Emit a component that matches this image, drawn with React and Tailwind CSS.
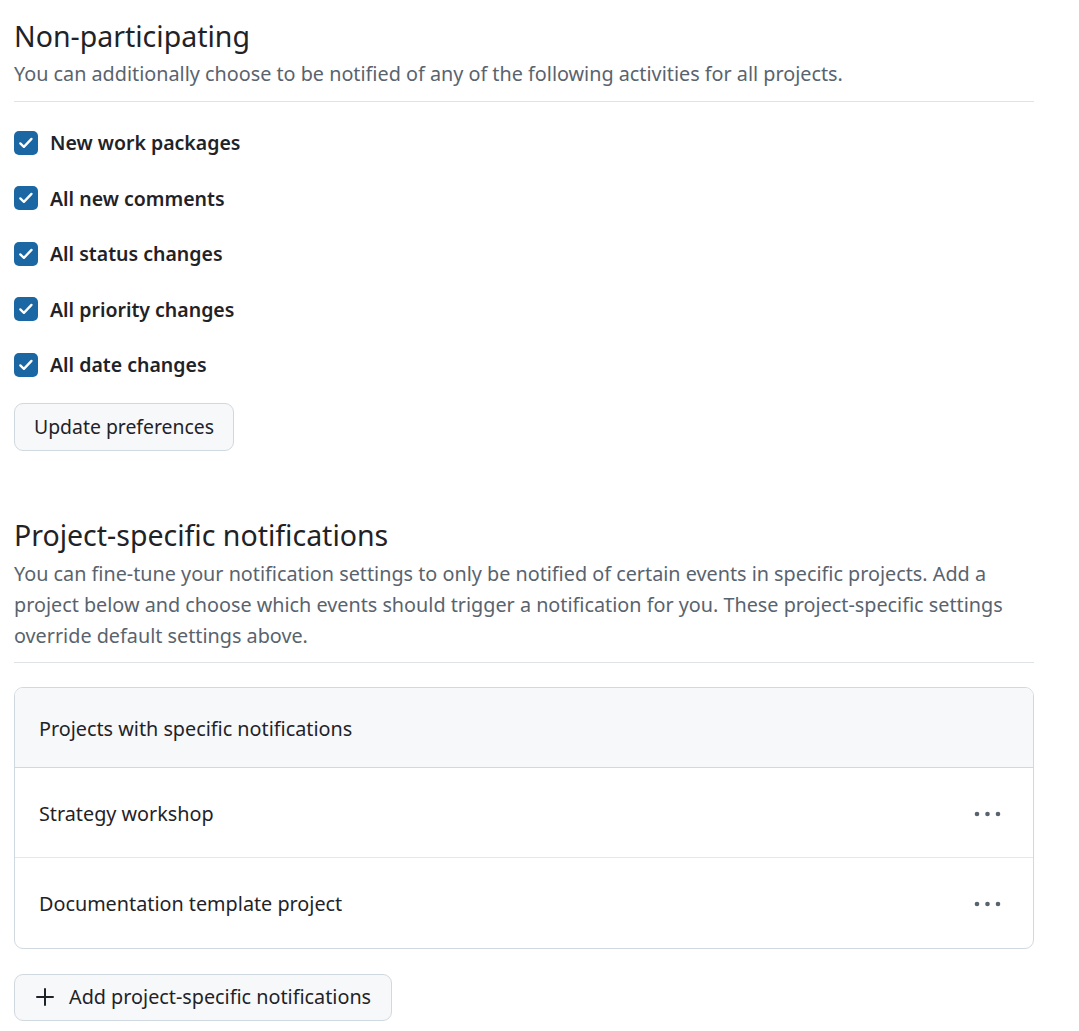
import React from 'react';

const activities = [
  'New work packages',
  'All new comments',
  'All status changes',
  'All priority changes',
  'All date changes',
];

const projects = ['Strategy workshop', 'Documentation template project'];

const CheckBox = () => (
  <span className="w-6 h-6 rounded-[5px] bg-[#1a67a3] flex items-center justify-center shrink-0">
    <svg width="18" height="18" viewBox="0 0 18 18" fill="none">
      <path d="M3.3 9.4l3.6 3.5 7.6-8" stroke="white" strokeWidth="2.3" strokeLinecap="round" strokeLinejoin="round" />
    </svg>
  </span>
);

const Kebab = () => (
  <svg width="30" height="8" viewBox="0 0 30 8" fill="#59636e">
    <circle cx="4" cy="4" r="2.3" />
    <circle cx="14.5" cy="4" r="2.3" />
    <circle cx="25" cy="4" r="2.3" />
  </svg>
);

export default function App() {
  return (
    <div className="bg-white min-h-screen pl-[14px] pr-[45px] pt-[18px] pb-4 text-[#1f2328]" style={{ fontFamily: '"Noto Sans", "Open Sans", sans-serif' }}>
      <h2 className="text-[28.5px] leading-[37px] font-normal">Non-participating</h2>
      <p className="mt-[4px] text-[19.8px] leading-[30px] text-[#59636e]">
        You can additionally choose to be notified of any of the following activities for all projects.
      </p>
      <div className="mt-[12px] border-t border-[#dfe3e8]" />

      <div className="mt-[13px] flex flex-col">
        {activities.map((a) => (
          <label key={a} className="h-[55.5px] flex items-center gap-3 text-[19.5px] font-semibold">
            <CheckBox />
            <span>{a}</span>
          </label>
        ))}
      </div>

      <button className="mt-[10px] h-12 px-[19px] rounded-[9px] border border-[#d1d9e0] bg-[#f6f8fa] text-[19.4px] text-[#1f2328]">
        Update preferences
      </button>

      <h2 className="mt-[66px] text-[28.5px] leading-[37px] font-normal">Project-specific notifications</h2>
      <p className="mt-[4px] text-[19.8px] leading-[31px] text-[#59636e]">
        You can fine-tune your notification settings to only be notified of certain events in specific projects. Add a project below and choose which events should trigger a notification for you. These project-specific settings override default settings above.
      </p>
      <div className="mt-[11px] border-t border-[#dfe3e8]" />

      <div className="mt-6 rounded-[9px] border border-[#d1d9e0] overflow-hidden">
        <div className="h-[80px] pt-[3px] bg-[#f6f8fa] border-b border-[#d1d9e0] flex items-center px-6 text-[19.8px]">
          Projects with specific notifications
        </div>
        {projects.map((p, i) => (
          <div
            key={p}
            className={`flex items-center justify-between pl-6 pr-[30px] text-[19.8px] ${i > 0 ? 'h-[91px] pt-[2px] border-t border-[#e4e8ec]' : 'h-[89px] pt-[4px]'}`}
          >
            <span>{p}</span>
            <Kebab />
          </div>
        ))}
      </div>

      <button className="mt-[25px] h-[47px] pl-5 pr-5 rounded-[9px] border border-[#d1d9e0] bg-[#f6f8fa] text-[19.8px] flex items-center gap-[14px]">
        <svg width="20" height="20" viewBox="0 0 20 20" fill="none">
          <path d="M10 2v16M2 10h16" stroke="#1f2328" strokeWidth="2" strokeLinecap="round" />
        </svg>
        Add project-specific notifications
      </button>
    </div>
  );
}
